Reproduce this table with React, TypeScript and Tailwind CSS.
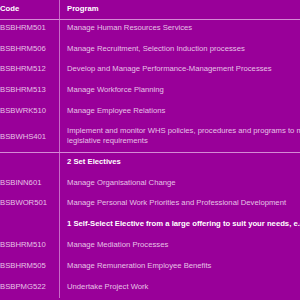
import type { ReactNode } from 'react';

type Unit = { code: string; program: string };

const CORE: Unit[] = [
  { code: 'BSBHRM501', program: 'Manage Human Resources Services' },
  { code: 'BSBHRM506', program: 'Manage Recruitment, Selection Induction processes' },
  { code: 'BSBHRM512', program: 'Develop and Manage Performance-Management Processes' },
  { code: 'BSBHRM513', program: 'Manage Workforce Planning' },
  { code: 'BSBWRK510', program: 'Manage Employee Relations' },
];

const SET_ELECTIVES: Unit[] = [
  { code: 'BSBINN601', program: 'Manage Organisational Change' },
  { code: 'BSBWOR501', program: 'Manage Personal Work Priorities and Professional Development' },
];

const SELF_SELECT: Unit[] = [
  { code: 'BSBHRM510', program: 'Manage Mediation Processes' },
  { code: 'BSBHRM505', program: 'Manage Remuneration Employee Benefits' },
  { code: 'BSBPMG522', program: 'Undertake Project Work' },
];

function Row({
  code,
  children,
  className = '',
  pad = 'pt-[3px]',
}: {
  code?: string;
  children: ReactNode;
  className?: string;
  pad?: string;
}) {
  return (
    <div className={`flex h-[20.7px] ${className}`}>
      <div className={`w-[60px] shrink-0 border-r border-[#c96ac9] ${pad}`}>{code}</div>
      <div className={`pl-[7px] whitespace-nowrap ${pad}`}>{children}</div>
    </div>
  );
}

function Heading({ children }: { children: ReactNode }) {
  return (
    <Row pad="pt-[4px]">
      <span className="font-bold text-white">{children}</span>
    </Row>
  );
}

export default function App() {
  return (
    <div
      className="h-[300px] w-[300px] overflow-hidden bg-[#990099] text-[7.7px] leading-[10px] text-[#e6c3e6]"
      style={{ fontFamily: '"Liberation Sans", Arial, sans-serif' }}
    >
      <div className="w-[420px]">
        <div className="flex h-[20px] border-b border-[#d58ad5] font-bold text-white">
          <div className="w-[60px] shrink-0 border-r border-[#c96ac9] pt-[4px]">Code</div>
          <div className="pl-[7px] pt-[4px]">Program</div>
        </div>

        {CORE.map((u) => (
          <Row key={u.code} code={u.code}>
            {u.program}
          </Row>
        ))}

        <div className="flex h-[29.5px] border-b border-[#d58ad5]">
          <div className="flex w-[60px] shrink-0 items-center border-r border-[#c96ac9] pb-[2px]">
            BSBWHS401
          </div>
          <div className="whitespace-nowrap pl-[7px] pt-[3px]">
            Implement and monitor WHS policies, procedures and programs to meet
            <br />
            legislative requirements
          </div>
        </div>

        <Heading>2 Set Electives</Heading>
        {SET_ELECTIVES.map((u) => (
          <Row key={u.code} code={u.code} pad="pt-[4px]">
            {u.program}
          </Row>
        ))}

        <Heading>1 Self-Select Elective from a large offering to suit your needs, e.g.</Heading>
        {SELF_SELECT.map((u) => (
          <Row key={u.code} code={u.code} pad="pt-[4.5px]">
            {u.program}
          </Row>
        ))}
      </div>
    </div>
  );
}
